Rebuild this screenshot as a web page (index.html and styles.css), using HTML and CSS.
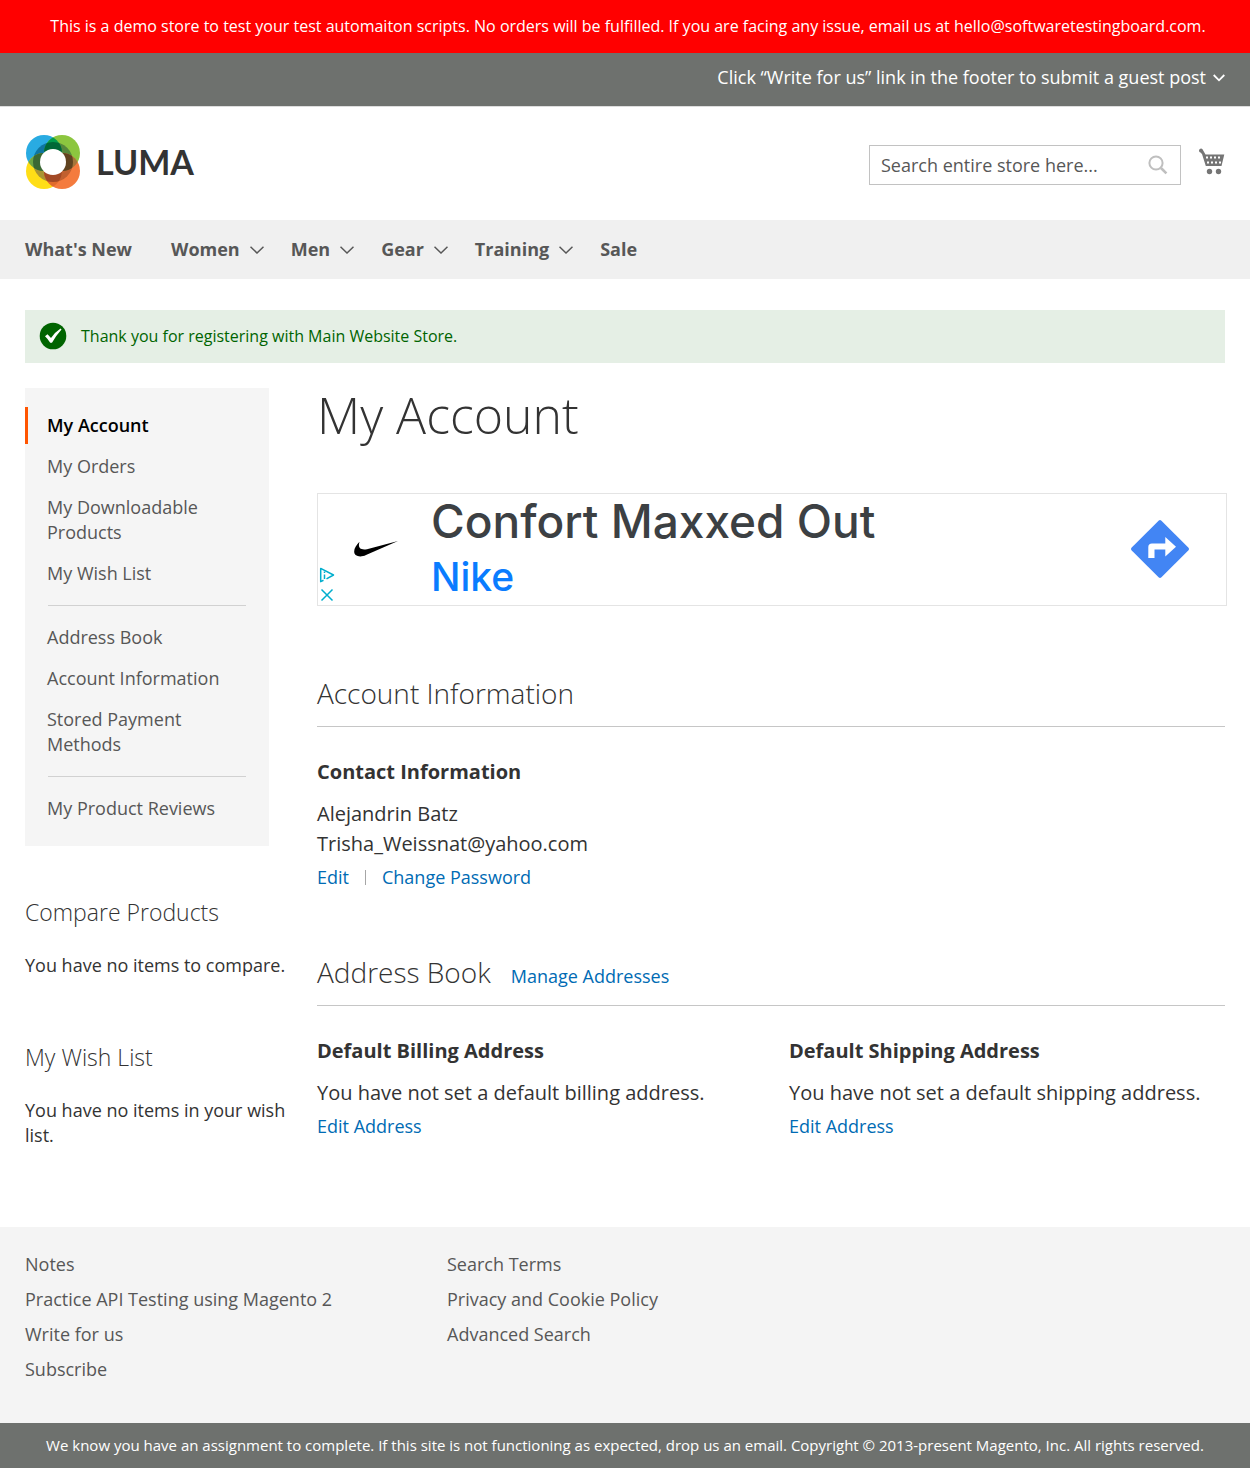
FILE: index.html
```html
<!DOCTYPE html>
<html lang="en">
<head>
<meta charset="utf-8">
<meta name="viewport" content="width=device-width, initial-scale=1">
<title>My Account</title>
<link rel="stylesheet" href="styles.css">
</head>
<body>
<p class="demo-notice">This is a demo store to test your test automaiton scripts. No orders will be fulfilled. If you are facing any issue, email us at hello@softwaretestingboard.com.</p>

<header>
  <div class="panel">
    <span>Click “Write for us” link in the footer to submit a guest post</span>
    <button class="panel-toggle" type="button" aria-label="Account menu">
      <svg width="12" height="8" viewBox="0 0 12 8"><path d="M.7 1 6 6.3 11.3 1" fill="none" stroke="currentColor" stroke-width="1.8"/></svg>
    </button>
  </div>
  <div class="header-content">
    <a class="logo" href="#">
      <svg width="54" height="54" viewBox="0 0 54 54" aria-hidden="true">
        <defs>
          <clipPath id="tl"><circle cx="18" cy="18" r="18"/></clipPath>
          <clipPath id="tr"><circle cx="36" cy="18" r="18"/></clipPath>
          <clipPath id="bl"><circle cx="18" cy="36" r="18"/></clipPath>
          <clipPath id="br"><circle cx="36" cy="36" r="18"/></clipPath>
        </defs>
        <circle cx="18" cy="18" r="18" fill="#29abe2"/>
        <circle cx="36" cy="18" r="18" fill="#8cc63f"/>
        <circle cx="18" cy="36" r="18" fill="#ffde17"/>
        <circle cx="36" cy="36" r="18" fill="#f47b3e"/>
        <circle cx="27" cy="27" r="20" fill="#0f75a0" clip-path="url(#tl)"/>
        <circle cx="27" cy="27" r="20" fill="#56873c" clip-path="url(#tr)"/>
        <circle cx="27" cy="27" r="20" fill="#a99434" clip-path="url(#bl)"/>
        <circle cx="27" cy="27" r="20" fill="#c1602f" clip-path="url(#br)"/>
        <g clip-path="url(#tl)">
          <circle cx="36" cy="18" r="18" fill="#009b4c"/>
          <circle cx="18" cy="36" r="18" fill="#6ca544"/>
        </g>
        <g clip-path="url(#br)">
          <circle cx="36" cy="18" r="18" fill="#a5763a"/>
          <circle cx="18" cy="36" r="18" fill="#e06c2c"/>
        </g>
        <g clip-path="url(#tl)">
          <g clip-path="url(#tr)"><circle cx="27" cy="27" r="20" fill="#006837"/></g>
          <g clip-path="url(#bl)"><circle cx="27" cy="27" r="20" fill="#3a6834"/></g>
        </g>
        <g clip-path="url(#br)">
          <g clip-path="url(#tr)"><circle cx="27" cy="27" r="20" fill="#604320"/></g>
          <g clip-path="url(#bl)"><circle cx="27" cy="27" r="20" fill="#a34a26"/></g>
        </g>
        <circle cx="27" cy="27" r="13" fill="#fff"/>
      </svg>
      <span class="logo-name">LUMA</span>
    </a>
    <form class="search" role="search">
      <input class="search-input" type="text" aria-label="Search" placeholder="Search entire store here...">
      <button class="search-button" type="button" aria-label="Search">
        <svg width="20" height="20" viewBox="0 0 20 20"><circle cx="8" cy="8" r="6.6" fill="none" stroke="#bfbfbf" stroke-width="2"/><path d="m13 13 5.4 5.4" stroke="#bfbfbf" stroke-width="2.6"/></svg>
      </button>
    </form>
    <a class="cart" href="#" aria-label="My Cart">
      <svg width="26" height="28" viewBox="0 0 26 28"><path fill="#757575" d="M0 2.500A2 2 0 0 1 3.500 1.200L6.500 6.500H25.300L22.500 18H6.800L3 6 1.500 4.500A2 2 0 0 1 0 2.500Z"/><path stroke="#fff" stroke-width="2" stroke-dasharray="2 2" d="M7 9.600h16M8 14.400h14"/><circle cx="10.500" cy="23.500" r="2.700" fill="#757575"/><circle cx="19.500" cy="23.500" r="2.700" fill="#757575"/></svg>
    </a>
  </div>
</header>

<nav class="main-nav" aria-label="Main">
  <a class="plain" href="#">What's New</a>
  <a href="#">Women <svg width="14" height="8" viewBox="0 0 14 8"><path d="M.5.8 7 7 13.500.8"/></svg></a>
  <a href="#">Men <svg width="14" height="8" viewBox="0 0 14 8"><path d="M.5.8 7 7 13.500.8"/></svg></a>
  <a href="#">Gear <svg width="14" height="8" viewBox="0 0 14 8"><path d="M.5.8 7 7 13.500.8"/></svg></a>
  <a href="#">Training <svg width="14" height="8" viewBox="0 0 14 8"><path d="M.5.8 7 7 13.500.8"/></svg></a>
  <a href="#">Sale</a>
</nav>

<main class="page">
  <div class="message" role="alert">
    <svg width="28" height="28" viewBox="0 0 28 28" aria-hidden="true"><circle cx="14" cy="14" r="13.300" fill="#006400"/><path d="M6 14.200 8.500 12.300 12 16Q15.500 10.500 21.500 6.500L22.500 7.500Q17 13.500 13 20.800H11.200Q9 17 6 14.200Z" fill="#fff"/></svg>
    <span>Thank you for registering with Main Website Store.</span>
  </div>

  <div class="columns">
    <aside class="sidebar">
      <nav class="account-nav" aria-label="Account">
        <ul>
          <li class="current"><strong>My Account</strong></li>
          <li><a href="#">My Orders</a></li>
          <li><a href="#">My Downloadable Products</a></li>
          <li><a href="#">My Wish List</a></li>
          <li class="delimiter"></li>
          <li><a href="#">Address Book</a></li>
          <li><a href="#">Account Information</a></li>
          <li><a href="#">Stored Payment Methods</a></li>
          <li class="delimiter"></li>
          <li><a href="#">My Product Reviews</a></li>
        </ul>
      </nav>
      <section class="side-block">
        <h2>Compare Products</h2>
        <p>You have no items to compare.</p>
      </section>
      <section class="side-block">
        <h2>My Wish List</h2>
        <p>You have no items in your wish list.</p>
      </section>
    </aside>

    <div class="content">
      <h1>My Account</h1>

      <section class="ad" aria-label="Advertisement">
        <div class="ad-controls">
          <button type="button" aria-label="About this ad"><svg width="16" height="16" viewBox="0 0 16 16" fill="none" stroke="#00aecd" stroke-width="1.500"><path d="M4.500 13.300 1.700 14.600V1.400L14.500 8 7.500 11.800" stroke-linejoin="round"/><path d="M5.500 7.500v4.500M5.500 4.500v1.500"/></svg></button>
          <button type="button" aria-label="Close ad"><svg width="16" height="16" viewBox="0 0 16 16" stroke="#00aecd" stroke-width="1.500"><path d="m2.500 2.500 11 11m0-11-11 11"/></svg></button>
        </div>
        <svg class="swoosh" width="44" height="16" viewBox="0 0 44 16" aria-hidden="true"><path d="M44 0 12 14C8 16 4 15.800 1.600 14-1.500 10.800.8 5.500 5.500.800 4 5.500 5 9.500 13 8.200Z" fill="#000"/></svg>
        <div class="ad-text"><a class="ad-title" href="#">Confort Maxxed Out</a><a class="ad-brand" href="#">Nike</a></div>
        <a class="ad-go" href="#" aria-label="Directions"><svg width="58" height="58" viewBox="0 0 58 58"><rect x="8" y="8" width="42" height="42" rx="2" fill="#4285f4" transform="rotate(45 29 29)"/><path d="M17.300 38V27Q17.300 23.500 21 23.500H34.300V17L45 26.700 34.300 36.500V29.500H23.500V38Z" fill="#fff"/></svg></a>
      </section>

      <section class="block">
        <div class="block-title"><h2>Account Information</h2></div>
        <div class="box">
          <h3>Contact Information</h3>
          <p>Alejandrin Batz<br>Trisha_Weissnat@yahoo.com</p>
          <div class="actions"><a href="#">Edit</a><span class="divider"></span><a href="#">Change Password</a></div>
        </div>
      </section>

      <section class="block">
        <div class="block-title"><h2>Address Book</h2><a href="#">Manage Addresses</a></div>
        <div class="boxes">
          <div class="box">
            <h3>Default Billing Address</h3>
            <p>You have not set a default billing address.</p>
            <div class="actions"><a href="#">Edit Address</a></div>
          </div>
          <div class="box">
            <h3>Default Shipping Address</h3>
            <p>You have not set a default shipping address.</p>
            <div class="actions"><a href="#">Edit Address</a></div>
          </div>
        </div>
      </section>
    </div>
  </div>
</main>

<footer>
  <div class="footer-links">
    <ul>
      <li><a href="#">Notes</a></li>
      <li><a href="#">Practice API Testing using Magento 2</a></li>
      <li><a href="#">Write for us</a></li>
      <li><a href="#">Subscribe</a></li>
    </ul>
    <ul>
      <li><a href="#">Search Terms</a></li>
      <li><a href="#">Privacy and Cookie Policy</a></li>
      <li><a href="#">Advanced Search</a></li>
    </ul>
  </div>
  <p class="copyright">We know you have an assignment to complete. If this site is not functioning as expected, drop us an email. Copyright © 2013-present Magento, Inc. All rights reserved.</p>
</footer>
</body>
</html>
```
FILE: styles.css
```css
* { box-sizing: border-box; }

body {
  margin: 0;
  background: #fff;
  color: #333;
  font: 400 18px/25px "Open Sans", "Noto Sans", sans-serif;
}

h1, h2, h3, p, ul { margin: 0; padding: 0; }
ul { list-style: none; }
a { color: #006bb4; text-decoration: none; }
button { border: 0; padding: 0; background: none; cursor: pointer; }
svg { display: block; flex: none; }

.demo-notice {
  padding: 14px 12px 14px 18px;
  background: #f00;
  color: #fff;
  font-size: 16px;
  text-align: center;
}

.panel {
  display: flex;
  justify-content: flex-end;
  align-items: center;
  gap: 7px;
  padding: 12px 25px 16px;
  border-bottom: 1px solid #ddd;
  background: #6e716e;
  color: #fff;
}
.panel-toggle { color: #fff; }

.header-content {
  display: flex;
  align-items: center;
  padding: 28px 25px 31px;
}
.logo {
  display: flex;
  align-items: center;
  gap: 16px;
  margin-right: auto;
  padding-left: 1px;
}
.logo-name {
  color: #333;
  font: 700 34px/54px Lato, sans-serif;
}
.search {
  display: flex;
  align-items: center;
  width: 312px;
  margin-top: 6px;
  border: 1px solid #c2c2c2;
}
.search-input {
  flex: 1;
  min-width: 0;
  height: 38px;
  padding: 0 11px;
  border: 0;
  color: #333;
  font: inherit;
}
.search-input::placeholder { color: #575757; opacity: 1; }
.search-button { padding-right: 12px; }
.cart { margin-left: 18px; }

.main-nav {
  display: flex;
  align-items: center;
  gap: 27px;
  padding: 17px 25px;
  background: #f0f0f0;
}
.main-nav a {
  display: flex;
  align-items: center;
  gap: 10px;
  color: #575757;
  font-weight: 700;
}
.main-nav .plain { margin-right: 12px; }
.main-nav path { fill: none; stroke: #575757; stroke-width: 1.5; }

.page { padding: 31px 25px 79px; }

.message {
  display: flex;
  align-items: center;
  gap: 14px;
  margin-bottom: 25px;
  padding: 12px 14px 13px;
  background: #e5efe5;
  color: #006400;
  font-size: 16px;
}

.columns {
  display: grid;
  grid-template-columns: 268px 1fr;
  column-gap: 24px;
}

.account-nav {
  margin: 0 24px 54px 0;
  padding: 19px 0;
  background: #f5f5f5;
}
.account-nav li { padding: 6px 48px 6px 22px; margin-bottom: 4px; }
.account-nav li:last-child { margin-bottom: 0; }
.account-nav a { color: #575757; }
.account-nav .current { padding-left: 19px; border-left: 3px solid #ff5501; color: #000; }
.account-nav strong { font-weight: 600; }
.account-nav .delimiter {
  height: 1px;
  margin: 13px 23px;
  padding: 0;
  background: #d1d1d1;
}

.side-block { margin-bottom: 67px; }
.side-block:last-child { margin-bottom: 0; }
.side-block h2 { margin-bottom: 28px; font-size: 23px; font-weight: 300; }

h1 { margin-bottom: 50px; font-size: 50px; line-height: 55px; font-weight: 300; }

.ad {
  display: flex;
  align-items: center;
  height: 113px;
  margin: 0 -2px 71px 0;
  padding-bottom: 2px;
  border: 1px solid #e4e4e4;
}
.ad-controls { display: grid; gap: 4px; align-self: flex-end; padding-left: 1px; }
.swoosh { margin-left: 19px; }
.ad-text { display: grid; gap: 2px; margin: 0 auto 0 33px; }
.ad-title, .ad-brand { font: 500 46px/54px Inter, sans-serif; }
.ad-title { color: #3c4043; }
.ad-brand { color: #0a7cff; font-size: 39px; }
.ad-go { margin-right: 37px; }

.block { margin-bottom: 66px; }
.block:last-child { margin-bottom: 0; }
.block-title {
  display: flex;
  align-items: baseline;
  gap: 20px;
  margin-bottom: 31px;
  padding-bottom: 16px;
  border-bottom: 1px solid #c6c6c6;
}
.block-title h2 { font-size: 28px; line-height: 33px; font-weight: 300; }
.boxes { display: grid; grid-template-columns: 1fr 1fr; gap: 36px; }
.box h3 { margin-bottom: 13px; font-size: 20px; line-height: 28px; font-weight: 700; }
.box p { margin-bottom: 6px; font-size: 20px; line-height: 30px; }
.actions { display: flex; align-items: center; }
.divider { width: 1px; height: 15px; margin: 0 16px; background: #a6a6a6; }

.footer-links {
  display: grid;
  grid-template-columns: 386px 1fr;
  gap: 36px;
  padding: 25px 25px 41px;
  background: #f4f4f4;
}
.footer-links li { margin-bottom: 10px; }
.footer-links li:last-child { margin-bottom: 0; }
.footer-links li a { color: #575757; }

.copyright {
  padding: 10px 25px;
  background: #6e716e;
  color: #fff;
  font-size: 15px;
  text-align: center;
}
```
